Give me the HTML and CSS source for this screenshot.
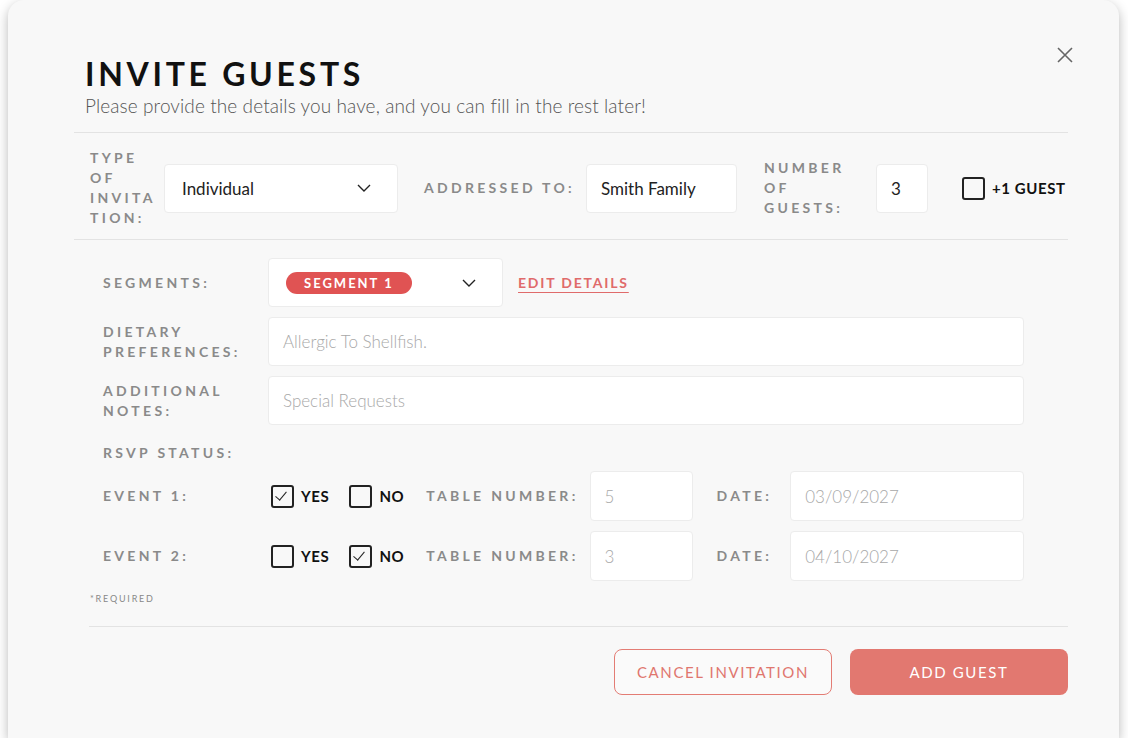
FILE: index.html
```html
<!DOCTYPE html>
<html lang="en">
<head>
    <meta charset="UTF-8">
    <meta name="viewport" content="width=device-width, initial-scale=1.0">
    <title>Invite Guests</title>
    <link rel="stylesheet" href="styles.css">
</head>
<body>
    <div class="modal">
        <button type="button" class="close" aria-label="Close">
            <svg width="16" height="16" viewBox="0 0 16 16"><path d="M1 1 L15 15 M15 1 L1 15" stroke="#666" stroke-width="1.6" fill="none"/></svg>
        </button>

        <div class="header">
            <h1>INVITE GUESTS</h1>
            <p>Please provide the details you have, and you can fill in the rest later!</p>
        </div>

        <div class="top-row">
            <label class="lbl lbl-type">TYPE OF INVITA TION:</label>
            <div class="field select type-select">
                <span>Individual</span>
                <svg class="chev" width="14" height="8" viewBox="0 0 14 8"><path d="M1 1 L7 7 L13 1" stroke="#222" stroke-width="1.4" fill="none"/></svg>
            </div>
            <label class="lbl lbl-addr">ADDRESSED TO:</label>
            <div class="field addr">Smith Family</div>
            <label class="lbl lbl-num">NUMBER OF GUESTS:</label>
            <div class="field num">3</div>
            <div class="check-item plus">
                <span class="box"></span>
                <span class="check-text">+1 GUEST</span>
            </div>
        </div>

        <div class="details">
            <label class="lbl">SEGMENTS:</label>
            <div class="seg-wrap">
                <div class="field select seg-select">
                    <span class="chip">SEGMENT 1</span>
                    <svg class="chev" width="14" height="8" viewBox="0 0 14 8"><path d="M1 1 L7 7 L13 1" stroke="#222" stroke-width="1.4" fill="none"/></svg>
                </div>
                <a href="#" class="edit">EDIT DETAILS</a>
            </div>

            <label class="lbl">DIETARY PREFERENCES:</label>
            <div class="field wide placeholder">Allergic To Shellfish.</div>

            <label class="lbl">ADDITIONAL NOTES:</label>
            <div class="field wide placeholder">Special Requests</div>

            <label class="lbl rsvp">RSVP STATUS:</label>
            <div></div>

            <label class="lbl">EVENT 1:</label>
            <div class="event">
                <div class="check-item"><span class="box checked"></span><span class="check-text">YES</span></div>
                <div class="check-item"><span class="box"></span><span class="check-text">NO</span></div>
                <label class="lbl table-lbl">TABLE NUMBER:</label>
                <div class="field table placeholder">5</div>
                <label class="lbl date-lbl">DATE:</label>
                <div class="field date placeholder">03/09/2027</div>
            </div>

            <label class="lbl">EVENT 2:</label>
            <div class="event">
                <div class="check-item"><span class="box"></span><span class="check-text">YES</span></div>
                <div class="check-item"><span class="box checked"></span><span class="check-text">NO</span></div>
                <label class="lbl table-lbl">TABLE NUMBER:</label>
                <div class="field table placeholder">3</div>
                <label class="lbl date-lbl">DATE:</label>
                <div class="field date placeholder">04/10/2027</div>
            </div>
        </div>

        <p class="required">*REQUIRED</p>

        <div class="footer">
            <button type="button" class="btn btn-cancel">CANCEL INVITATION</button>
            <button type="button" class="btn btn-add">ADD GUEST</button>
        </div>
    </div>
</body>
</html>
```

FILE: styles.css
```css
body {
    margin: 0;
    background: #ffffff;
    font-family: Lato, "Open Sans", sans-serif;
    color: #222;
}

.modal {
    position: relative;
    box-sizing: border-box;
    width: 1111px;
    height: 738px;
    margin-left: 8px;
    padding: 54px 51px 0 66px;
    background: #f8f8f8;
    border-radius: 16px 16px 0 0;
    box-shadow: 0 4px 12px rgba(0, 0, 0, 0.28);
}

.close {
    position: absolute;
    top: 47px;
    right: 46px;
    border: none;
    background: none;
    padding: 0;
    width: 16px;
    height: 16px;
    cursor: pointer;
}

.header {
    padding-left: 11px;
    padding-bottom: 14px;
    border-bottom: 1px solid #e3e3e3;
}

.header h1 {
    margin: 0;
    font-size: 32px;
    line-height: 40px;
    font-weight: 700;
    letter-spacing: 3.7px;
    color: #111;
}

.header p {
    margin: 0;
    font-size: 19px;
    line-height: 24px;
    font-weight: 300;
    letter-spacing: 0.1px;
    color: #555;
}

.lbl {
    font-size: 14px;
    line-height: 20px;
    font-weight: 700;
    letter-spacing: 3.3px;
    color: #8a8a8a;
}

.field {
    box-sizing: border-box;
    display: flex;
    align-items: center;
    flex-shrink: 0;
    background: #fff;
    border: 1px solid #ececec;
    border-radius: 4px;
    height: 49px;
    padding: 0 14px;
    font-size: 17px;
    color: #222;
}

.placeholder {
    color: #a8a8a8;
    font-weight: 300;
}

.select {
    justify-content: space-between;
}

.chev {
    margin-right: 12px;
}

.top-row {
    display: flex;
    align-items: center;
    height: 102px;
    padding: 4px 0 0 16px;
    border-bottom: 1px solid #e3e3e3;
}

.top-row > * {
    flex-shrink: 0;
}

.lbl-type {
    width: 67px;
    margin-right: 7px;
}

.type-select {
    width: 234px;
    padding-left: 17px;
}

.lbl-addr {
    white-space: nowrap;
    margin-left: 26px;
    margin-right: 11px;
}

.addr {
    width: 151px;
    padding-left: 14px;
}

.lbl-num {
    width: 86px;
    margin-left: 27px;
    margin-right: 26px;
}

.num {
    width: 52px;
    padding-left: 14px;
}

.check-item {
    display: flex;
    align-items: center;
    flex-shrink: 0;
}

.plus {
    margin-left: 34px;
}

.box {
    box-sizing: border-box;
    position: relative;
    width: 23px;
    height: 23px;
    border: 2px solid #222;
    border-radius: 3px;
    margin-right: 7px;
}

.box.checked::after {
    content: "";
    position: absolute;
    left: 5px;
    top: 2px;
    width: 5px;
    height: 10px;
    border-right: 1.6px solid #222;
    border-bottom: 1.6px solid #222;
    transform: rotate(40deg);
}

.check-text {
    white-space: nowrap;
    font-size: 15px;
    font-weight: 700;
    letter-spacing: 0.6px;
    color: #111;
}

.details {
    display: grid;
    grid-template-columns: 165px 1fr;
    row-gap: 10px;
    align-items: center;
    margin: 18px 44px 0 29px;
}

.seg-wrap {
    display: flex;
    align-items: center;
}

.seg-select {
    width: 235px;
    padding-left: 17px;
}

.chip {
    background: #e05353;
    color: #fff;
    font-size: 13px;
    font-weight: 700;
    letter-spacing: 2px;
    line-height: 22px;
    border-radius: 11px;
    padding: 0 18px;
}

.edit {
    margin-left: 15px;
    font-size: 14px;
    font-weight: 700;
    letter-spacing: 1.8px;
    color: #e06b6b;
    text-decoration: underline;
    text-underline-offset: 4px;
}

.wide {
    width: 100%;
}

.rsvp {
    margin-top: 8px;
    margin-bottom: -2px;
}

.event {
    display: flex;
    align-items: center;
    padding-left: 3px;
}

.event .check-item {
    margin-right: 20px;
}

.table-lbl {
    white-space: nowrap;
    margin-left: 2px;
    margin-right: 11px;
}

.event .field {
    height: 50px;
}

.table {
    width: 103px;
    padding-left: 14px;
}

.date-lbl {
    margin-left: 24px;
    margin-right: 18px;
}

.date {
    flex: 1;
    padding-left: 14px;
}

.required {
    margin: 11px 0 0 16px;
    font-size: 9px;
    line-height: 14px;
    letter-spacing: 1.8px;
    color: #888;
}

.footer {
    display: flex;
    justify-content: flex-end;
    gap: 18px;
    margin-left: 15px;
    margin-top: 20px;
    padding-top: 22px;
    border-top: 1px solid #e3e3e3;
}

.btn {
    width: 218px;
    height: 46px;
    border-radius: 8px;
    font-family: Lato, "Open Sans", sans-serif;
    font-size: 15px;
    letter-spacing: 1.6px;
    cursor: pointer;
}

.btn-cancel {
    background: #fafafa;
    border: 1.5px solid #e37c74;
    color: #e0766e;
}

.btn-add {
    background: #e27870;
    border: none;
    color: #fff;
}
```
